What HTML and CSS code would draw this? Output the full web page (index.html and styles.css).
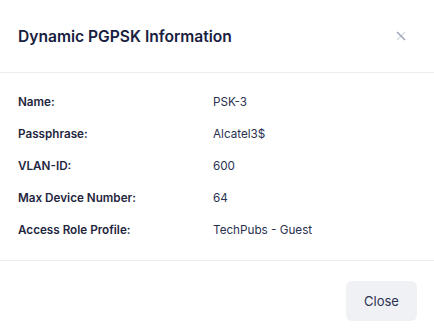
FILE: index.html
```html
<!DOCTYPE html>
<html>
<head>
    <title>Dynamic PGPSK Information</title>
    <link rel="stylesheet" href="styles.css">
</head>
<body>
    <div class="modal">
        <div class="modal-header">
            <h2 class="modal-title">Dynamic PGPSK Information</h2>
            <button class="close-icon" aria-label="Close">
                <svg width="10" height="10" viewBox="0 0 10 10">
                    <path d="M9 1 L1 9" stroke="#d5d9e3" stroke-width="1.1" fill="none"/>
                    <path d="M1 1 L9 9" stroke="#9aa2b8" stroke-width="1.4" fill="none"/>
                </svg>
            </button>
        </div>
        <div class="modal-body">
            <div class="info-row"><span class="info-label">Name:</span><span class="info-value">PSK-3</span></div>
            <div class="info-row"><span class="info-label">Passphrase:</span><span class="info-value">Alcatel3$</span></div>
            <div class="info-row"><span class="info-label">VLAN-ID:</span><span class="info-value">600</span></div>
            <div class="info-row"><span class="info-label">Max Device Number:</span><span class="info-value">64</span></div>
            <div class="info-row"><span class="info-label">Access Role Profile:</span><span class="info-value">TechPubs - Guest</span></div>
        </div>
        <div class="modal-footer">
            <button class="btn-close">Close</button>
        </div>
    </div>
</body>
</html>
```

FILE: styles.css
```css
body {
    margin: 0;
    padding: 0;
    background-color: #fff;
    font-family: Inter, "Noto Sans", sans-serif;
    color: #1b2340;
}

.modal {
    width: 434px;
}

.modal-header {
    display: flex;
    align-items: center;
    justify-content: space-between;
    height: 72px;
    padding: 0 18px;
    border-bottom: 1px solid #ececef;
}

.modal-title {
    margin: 0;
    font-size: 15.6px;
    font-weight: 600;
    color: #172040;
}

.close-icon {
    border: none;
    background: none;
    padding: 0;
    margin-right: 10px;
    width: 10px;
    height: 10px;
    display: flex;
    cursor: pointer;
}

.modal-body {
    padding: 13px 18px 14px;
}

.info-row {
    display: flex;
    height: 32px;
    align-items: center;
    font-size: 11.7px;
}

.info-label {
    width: 195px;
    font-weight: 600;
    color: #1f2640;
}

.info-value {
    color: #2a3150;
}

.modal-footer {
    display: flex;
    justify-content: flex-end;
    padding: 20px 17px;
    border-top: 1px solid #ececef;
}

.btn-close {
    font-family: Inter, "Noto Sans", sans-serif;
    font-size: 13px;
    color: #2a3150;
    background-color: #f0f1f4;
    border: none;
    border-radius: 6px;
    width: 71px;
    height: 40px;
    cursor: pointer;
}
```
